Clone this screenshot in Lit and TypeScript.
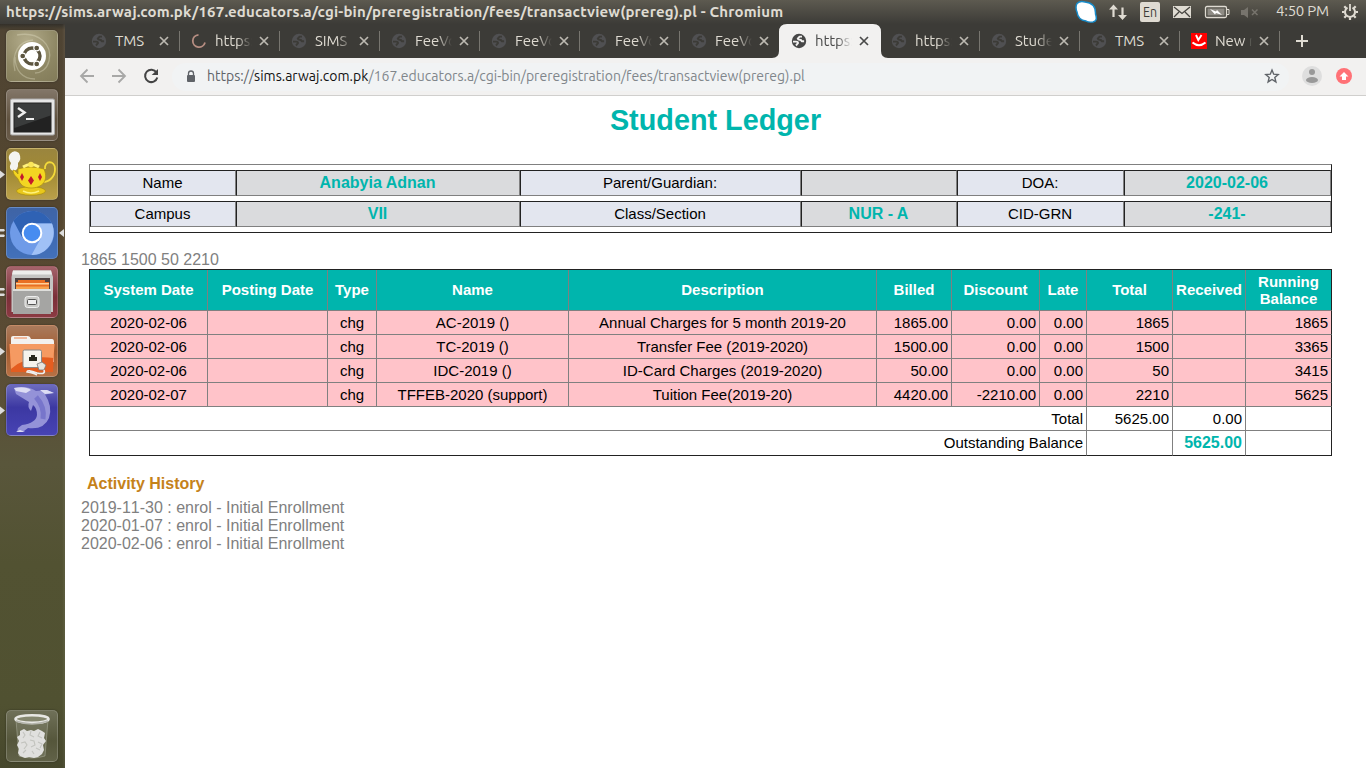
import { LitElement, html, css, svg } from "lit";
import { customElement } from "lit/decorators.js";
import { classMap } from "lit/directives/class-map.js";

const globe = svg`<circle cx="8" cy="8" r="7.200" fill="currentColor"/><path class="land" d="M11 3.600H8.600L6.700 5.600q.3 1.200 2 1.200 1.800 0 2 1.500h2.400M2 8.600h3q2.200 0 2 1.600-.8 1-2 2.300" fill="none" stroke-width="1.900" stroke-linejoin="round"/>`;

interface Tab { label: string; icon?: string; active?: boolean; sep?: boolean }
const tabs: Tab[] = [
  { label: "TMS", sep: true },
  { label: "https:", icon: "spin", sep: true },
  { label: "SIMS", sep: true },
  { label: "FeeVo", sep: true },
  { label: "FeeVo", sep: true },
  { label: "FeeVo", sep: true },
  { label: "FeeVo" },
  { label: "https:", active: true },
  { label: "https:", sep: true },
  { label: "Stude", sep: true },
  { label: "TMS", sep: true },
  { label: "New m", icon: "vod", sep: true },
];

const info: string[][] = [
  ["Name", "Anabyia Adnan", "Parent/Guardian:", "", "DOA:", "2020-02-06"],
  ["Campus", "VII", "Class/Section", "NUR - A", "CID-GRN", "-241-"],
];
const heads = ["System Date", "Posting Date", "Type", "Name", "Description", "Billed", "Discount", "Late", "Total", "Received", "Running Balance"];
const rows = [
  ["2020-02-06", "", "chg", "AC-2019 ()", "Annual Charges for 5 month 2019-20", "1865.00", "0.00", "0.00", "1865", "", "1865"],
  ["2020-02-06", "", "chg", "TC-2019 ()", "Transfer Fee (2019-2020)", "1500.00", "0.00", "0.00", "1500", "", "3365"],
  ["2020-02-06", "", "chg", "IDC-2019 ()", "ID-Card Charges (2019-2020)", "50.00", "0.00", "0.00", "50", "", "3415"],
  ["2020-02-07", "", "chg", "TFFEB-2020 (support)", "Tuition Fee(2019-20)", "4420.00", "-2210.00", "0.00", "2210", "", "5625"],
];

@customElement("desktop-launcher")
class DesktopLauncher extends LitElement {
  static styles = css`
    :host { display: flex; flex-direction: column; gap: 7px; box-sizing: border-box; width: 65px; padding: 6px 0 6px;
      background: linear-gradient(90deg, #0000 62px, #fff1 65px), linear-gradient(#33302a 0, #4f4433 6px, #54462f 180px, #5b4c35 330px, #59563b 440px, #525232 540px, #505131 680px, #46472c 100%); }
    .item { display: flex; align-items: center; height: 52px; }
    .left { width: 6px; height: 14px; }
    .right { width: 7px; height: 14px; }
    .tile { width: 52px; height: 52px; box-sizing: border-box; border-radius: 5px; border: 1px solid #ffffff30; overflow: hidden; box-shadow: 0 0 2px #0006; }
    .tile svg { display: block; width: 50px; height: 50px; }
    .dash { background: radial-gradient(circle at 40% 20%, #b3ac8b, #8e8764 60%, #827b59); }
    .term { background: linear-gradient(#827668, #60523f 60%, #695b49); }
    .tea { background: linear-gradient(#9a853e, #a38b34 50%, #baa04a); }
    .chrome { background: linear-gradient(#3f64a5, #3d68b2 50%, #4371b9); }
    .files { background: linear-gradient(#a5636b, #7b2f38 60%, #8b3a42); }
    .net { background: linear-gradient(#a97a5c, #a35c30 50%, #b87144); }
    .fish { background: linear-gradient(#6c6bbd, #3c38a2 45%, #4743b4); }
    .bin { background: linear-gradient(#6f7058, #55563b 60%, #616248); }
    .spacer { flex: 1; }
  `;

  art(kind: string) {
    switch (kind) {
      case "dash": return svg`
        <path d="M8 40C4 22 12 10 26 9M10 4c22-4 36 10 32 26-2 8-8 12-14 12M8 26c0 14 8 22 20 22" fill="none" stroke="#e6e1c8" stroke-opacity=".35" stroke-width="1.300"/>
        <circle cx="25" cy="25" r="14" fill="#fff"/><circle cx="25" cy="25" r="8" fill="none" stroke="#5c5540" stroke-width="3.400"/>
        <g fill="#5c5540" stroke="#fff" stroke-width="1.100"><circle cx="15.700" cy="25" r="2.900"/><circle cx="29.700" cy="17" r="2.900"/><circle cx="29.700" cy="33" r="2.900"/></g>`;
      case "term": return svg`
        <rect x="3.500" y="9" width="44" height="36" rx="1.500" fill="#e6e6e6" stroke="#aaa"/><rect x="6.500" y="12.500" width="38" height="30" fill="#222"/>
        <path d="M7.500 13.500h36v12L7.500 38z" fill="#3a3c3c"/><path d="m11 18 6.500 4.500L11 27" fill="none" stroke="#eee" stroke-width="2.500"/><path d="M19 29h8" stroke="#eee" stroke-width="2.200"/>`;
      case "tea": return svg`
        <path d="M3 5q4-5 9-1 3 6-1 10 1 7-5 8Q1 20 4 14 0 9 3 5z" fill="#f4f4f0"/>
        <path d="M38 20c-1-9 10-9 10 0 0 8-6 13-12 13" fill="none" stroke="#f3da3a" stroke-width="1.800"/>
        <ellipse cx="24" cy="42" rx="14.500" ry="4.300" fill="#e9c81b" stroke="#a98d10" stroke-width=".7"/>
        <path d="M11 20q13-4 26 0c5 12-2 19-13 19-8 0-11-4-13-9-2-3-5-4-5-9 2 0 4 3 5 4z" fill="#f3d622" stroke="#aa8d10" stroke-width=".7"/>
        <path d="M16 18q8-5 16 0" fill="none" stroke="#fff27b" stroke-width="3"/><circle cx="24" cy="15.500" r="2.800" fill="#fbe75a"/>
        <path d="m15 24 2 4-2 4-2-4zM24 27l3 4.500-3 4.500-3-4.500zM33 24l2 4-2 4-2-4z" fill="#c4182c"/><path d="M16 42q8 4 16 0" fill="none" stroke="#fff27b" stroke-width="1.500"/>`;
      case "chrome": return svg`
        <circle cx="25" cy="25" r="22" fill="#6f9be8"/><path d="M6.500 13C14 1 33-1 42 11l3 4.500H25L15.500 30z" fill="#2f62b4"/><path d="M25 15.500h20C51 31 40 48 24.500 47L34 30z" fill="#a0c1f6"/>
        <circle cx="25" cy="25" r="10.300" fill="#fff"/><circle cx="25" cy="25" r="8.300" fill="#478cf0"/>`;
      case "files": return svg`
        <path d="M6 3.500h38l2 6.500v35H4.500V10z" fill="#c4c4c2"/><path d="M6 3.500h38l1 4H5z" fill="#ededeb"/><path d="M8 11h35v12H8z" fill="#4e4140"/>
        <path d="M11 13h27v2h4v7H9v-7h2z" fill="#e96f24"/><path d="M9 16h33v1.500H9z" fill="#ffd19a"/><path d="M9 19.500h33V23H9z" fill="#f7a24d"/>
        <path d="M6 22h38v25H6z" fill="#a5a5a3"/><path d="M6 22h38v2H6z" fill="#dededb"/><rect x="18" y="29.500" width="14" height="11" rx="2.500" fill="#c9c9c6" stroke="#eee"/><rect x="20.500" y="32.500" width="9" height="5" rx="1" fill="#eee" stroke="#555"/>`;
      case "net": return svg`
        <path d="M4 12q0-2 2-2h15q2 0 3 3h21q2 0 2 3v20H4z" fill="#f3f1ef"/><path d="M7 12h13" stroke="#f0b89c" stroke-width="2"/>
        <path d="M2.500 18h45L46 46H4z" fill="#e45d20"/><path d="M2.500 18h45L46.500 32Q20 28 4 43z" fill="#f59a62"/>
        <rect x="16" y="24" width="18.500" height="17.500" rx="1.500" fill="#f5f4ee" stroke="#888"/><path d="M22 35v-4h2v-2h4v2h2v4z" fill="#28291e"/>
        <path d="m30 38 5-2 4 3-2 5h-5z" fill="#e5e3df" stroke="#777" stroke-width=".8"/><path d="M37 44q2 5-7 3-10-4-10-1 7 1 10 3" fill="none" stroke="#eee" stroke-width="1.600"/>`;
      case "fish": return svg`
        <path d="M7 3q13-3 22 3l11-1 7 3-9 1.500q8 12 4 23.500-5 12-21 10l-4 3-7 1 1-4 4-3q14-2 15-10 0-7-4-10l-2 6q-4-4-2-9L9 9z" fill="#9492d8"/>
        <path d="M7 3q12-2 17 2l-5 3-10-2zM33 5l7 0 7 3-9 1zM9 47l4-2 5 2z" fill="#dcdcf4"/><path d="M29 12q9 10 7 22" fill="none" stroke="#7775cb" stroke-width="5"/>`;
      default: return svg`
        <path d="M9 9h32l-3 36q-13 4-26 0z" fill="#a9ab9c" fill-opacity=".22" stroke="#bbbcae" stroke-opacity=".45"/>
        <path d="m13 20 4-2 3 2 4-1 3 1 4-2 4 2 3 2-1 5 2 3-3 4 1 5-2 4-4 3-4 1-5-1-4 1-5-2-2-3 1-4-2-4 2-4-2-4 3-2z" fill="#e0e0de"/>
        <path d="m16 21 2 3-2 3m8-7-1 4 4 2m6-5-2 4 4 2M14 32l4-1 2 3-3 4m6-9 4 1 1 4-4 2m7-5 4 2-2 4m-17 5 3-3m6 1 2 3m2-6 4 2" fill="none" stroke="#c2c3be" stroke-width="1.100"/>
        <ellipse cx="25" cy="8" rx="16.500" ry="3.800" fill="#85876f" stroke="#e8e8e4" stroke-width="2.600"/><path d="M9 10q16 6 32 0" fill="none" stroke="#b5b6ad" stroke-width="1.500"/>`;
    }
  }

  item(kind: string, left = 0, right = false) {
    const marks = [svg``, svg`<path d="M0 3.500 5 7.500 0 11.500z" fill="#ddd"/>`, svg`<path d="M0 3h4l1 1.200L4 5.500H0zM0 8.500h4l1 1.200L4 11H0z" fill="#ddd"/>`];
    return html`<div class="item">
      <svg class="left" viewBox="0 0 6 14">${marks[left]}</svg>
      <div class="tile ${kind}"><svg viewBox="0 0 50 50">${this.art(kind)}</svg></div>
      <svg class="right" viewBox="0 0 7 14">${right ? svg`<path d="M6 3 1 7l5 4z" fill="#ddd"/>` : svg``}</svg>
    </div>`;
  }
  render() {
    return html`${this.item("dash")}${this.item("term")}${this.item("tea", 1)}${this.item("chrome", 2, true)}${this.item("files", 2)}${this.item("net", 1)}${this.item("fish", 1)}
      <div class="spacer"></div>${this.item("bin")}`;
  }
}

@customElement("student-ledger")
class StudentLedger extends LitElement {
  static styles = css`
    :host { display: block; box-sizing: border-box; background: #fff; color: #808080; padding: 8px 24px 0 16px; font: 16px/18px "Liberation Sans", Arial, sans-serif; }
    h1 { margin: 0 0 0 8px; height: 60px; width: 1253px; text-align: center; color: #00b5ad; font: bold 28.8px/33px "Liberation Sans", Arial, sans-serif; }
    .info { margin-left: 8px; width: 1243px; box-sizing: border-box; height: 69px; border: 1px solid; border-color: #808080 #222 #222 #808080;
      display: grid; grid-template-columns: 146px 284px 281px 156px 167px 207px; grid-template-rows: 26px 26px; row-gap: 5px; padding-top: 5px; }
    .cell { border: 1px solid; border-color: #222 #808080 #808080 #222; text-align: center; line-height: 24px; font-size: 15px; color: #000; background: #e3e6ef; padding-right: 1px; }
    .cell.val { background: #dadbdd; color: #00b5ad; font-weight: bold; font-size: 16px; }
    .sums { margin-top: 18px; height: 18px; }
    .ledger { margin-left: 8px; width: 1243px; box-sizing: border-box; border: 1px solid #222; border-right: 0; border-bottom: 0; display: grid;
      grid-template-columns: 118px 120px 49px 192px 308px 75px 88px 47px 86px 73px 86px; grid-template-rows: 41px repeat(5, 24px) 25px; font-size: 15px; color: #000; }
    .c { border-right: 1px solid #808080; border-bottom: 1px solid #808080; display: flex; align-items: center; justify-content: center; text-align: center; line-height: 17px; }
    .end { border-right-color: #222; }
    .last { border-bottom-color: #222; padding-bottom: 1px; }
    .head { background: #00b5ad; color: #fff; font-weight: bold; padding-bottom: 1px; }
    .head.end { padding-bottom: 0; }
    .pink { background: #ffc3c9; }
    .num { justify-content: flex-end; padding-right: 3px; }
    .wide { grid-column: span 8; }
    .due { color: #00b5ad; font-weight: bold; font-size: 16px; }
    h2 { margin: 19px 0 0 6px; height: 24px; font: bold 16px/18px "Liberation Sans", Arial, sans-serif; color: #c5821a; }
    .event { font-kerning: none; }
  `;
  foot(label: string, total: string, received: string, last: boolean) {
    const cls = { c: true, num: true, last };
    return html`<div class=${classMap({ ...cls, wide: true })}>${label}</div><div class=${classMap(cls)}>${total}</div>
      <div class=${classMap({ ...cls, due: last })}>${received}</div><div class=${classMap({ ...cls, end: true })}></div>`;
  }
  render() {
    return html`
      <h1>Student Ledger</h1>
      <div class="info">${info.map(r => r.map((t, i) => html`<div class=${classMap({ cell: true, val: i % 2 === 1 })}>${t}</div>`))}</div>
      <div class="sums">1865 1500 50 2210</div>
      <div class="ledger">
        ${heads.map((t, i) => html`<div class=${classMap({ c: true, head: true, end: i === 10 })}>${t}</div>`)}
        ${rows.map(r => r.map((t, i) => html`<div class=${classMap({ c: true, pink: true, num: i > 4, end: i === 10 })}>${t}</div>`))}
        ${this.foot("Total", "5625.00", "0.00", false)}
        ${this.foot("Outstanding Balance", "", "5625.00", true)}
      </div>
      <h2>Activity History</h2>
      ${["2019-11-30", "2020-01-07", "2020-02-06"].map(d => html`<div class="event">${d} : enrol - Initial Enrollment</div>`)}`;
  }
}

@customElement("app-root")
class AppRoot extends LitElement {
  static styles = css`
    :host { display: grid; grid-template: 24px 744px / 65px 1301px; width: 1366px; height: 768px; overflow: hidden; font-family: Ubuntu, "Noto Sans", sans-serif; }
    svg { display: block; flex: none; }
    .panel { grid-column: 1 / 3; display: flex; align-items: center; padding-left: 6px; background: linear-gradient(#5d5a50, #3c3b37); color: #dfdbd2; }
    .title { flex: none; width: 1069px; font-size: 15px; font-weight: bold; line-height: 24px; letter-spacing: 0.2px; white-space: nowrap; }
    .tray { width: 201px; height: 24px; }
    .clock { flex: none; font-size: 15px; line-height: 18px; padding-bottom: 2px; width: 65px; letter-spacing: -0.25px; white-space: nowrap; }
    .main { display: grid; grid-template-rows: 34px 38px 1fr; }
    .tabs { display: flex; background: #3c3b37; padding-left: 15px; }
    .tab { position: relative; flex: none; width: 100px; box-sizing: border-box; display: flex; align-items: center; padding-left: 11px; color: #dfdbd2; font-size: 15px; }
    .tab svg.ico { width: 16px; height: 16px; color: #505052; }
    .land { stroke: #3c3b37; }
    .label { flex: none; margin-left: 8px; padding-bottom: 2px; width: 44px; white-space: nowrap; -webkit-mask-image: linear-gradient(90deg, #000 22px, #0000 37px); letter-spacing: -0.1px; }
    .label.short { -webkit-mask-image: none; }
    .label.word { -webkit-mask-image: linear-gradient(90deg, #000 29px, #0000 37px); }
    .x { width: 10px; height: 10px; color: #bcb9b1; }
    .sep::after { content: ""; position: absolute; right: 0; top: 7px; width: 1px; height: 20px; background: #77756f; }
    .tab.active { color: #4a4a4a; }
    .shape { position: absolute; left: -8px; top: 0; width: 116px; height: 34px; }
    .active .ico, .active .label, .active .x { position: relative; }
    .active svg.ico { color: #474747; }
    .active .x { color: #4a4a4a; }
    .active .land { stroke: #f2f1f0; }
    .plus { margin: 11px 0 0 16px; width: 12px; height: 12px; }
    .bar { display: flex; align-items: center; background: #f2f1f0; border-bottom: 1px solid #d0cfcd; }
    .nav { width: 107px; height: 37px; }
    .omni { width: 1117px; height: 28px; border-radius: 14px; background: #f1f3f4; display: flex; align-items: center; font-size: 14px; color: #80868b; letter-spacing: 0.01px; white-space: nowrap; }
    .lock { width: 35px; height: 28px; }
    .url { flex: none; width: 1042px; padding-bottom: 2px; }
    .scheme { color: #5f6368; }
    .host { color: #111; }
    .ends { width: 77px; height: 37px; }
  `;

  icon(t: Tab) {
    if (t.icon === "spin") return svg`<path d="M7.500 1.800A6.200 6.200 0 1 0 14 9.500" fill="none" stroke="#b78e82" stroke-width="1.800"/>`;
    if (t.icon === "vod") return svg`<path d="M0 0h16v16H0z" fill="#f00"/><path d="m5 2 2.300 5L10.500 2" fill="none" stroke="#fff" stroke-width="1.900"/><path d="M1.500 9.500q6.500 5.500 13 0" fill="none" stroke="#fff" stroke-width="1.900"/>`;
    return globe;
  }

  render() {
    return html`
      <div class="panel">
        <div class="title">https://sims.arwaj.com.pk/167.educators.a/cgi-bin/preregistration/fees/transactview(prereg).pl - Chromium</div>
        <svg class="tray" viewBox="1075 0 201 24">
          <path d="M1077 3.500q3-3 8-1.500 11 1 10.500 12 2.500 7-2.500 8-5 .5-7-1-8-1-9-9-2-5 0-8.500z" fill="#fff" stroke="#178bc9" stroke-width="1.500"/>
          <path d="M1113.500 4.500 1109 9.500h3.400V17h2.200V9.500h3.400zM1122.500 20l4.500-5h-3.400V7.500h-2.200V15h-3.400z" fill="#dfdbd2"/>
          <rect x="1140" y="2" width="20" height="20" rx="2" fill="#dfdbd2"/><text x="1143" y="17" font-size="14" fill="#3c3b37" textLength="14" lengthAdjust="spacingAndGlyphs">En</text>
          <rect x="1173" y="6" width="18" height="12" fill="#dfdbd2"/><path d="m1174 7 8 6.500 8-6.500M1174 17l5-5m11 5-5-5" fill="none" stroke="#45433e" stroke-width="1.300"/>
          <rect x="1205.500" y="6.500" width="21" height="11" rx="1.500" fill="none" stroke="#dfdbd2" stroke-width="1.300"/><path d="M1207.500 8.500h17v7h-17z" fill="#8f8c85"/><path d="M1227 9.500h2v5h-2" fill="none" stroke="#dfdbd2"/><path d="m1210 9 6 2.500 1-1.500 5 5-6-2-1 1.500z" fill="#fff"/>
          <path d="M1241 10h3l4-3v11l-4-3h-3z" fill="#77746d"/><path d="m1252 9.500 5.500 5.500m0-5.500-5.500 5.500" stroke="#77746d" stroke-width="1.500"/>
        </svg>
        <div class="clock">4:50 PM</div>
        <svg width="18" height="18" viewBox="0 0 18 18"><g fill="none" stroke="#dfdbd2"><path d="M6.500 4.600a5 5 0 1 0 5 0" stroke-width="2"/><path d="M9 1v7" stroke-width="1.800"/><path d="M1 9h2.500M14.500 9H17M9 14.500V17M3.300 3.300l1.900 1.900M14.700 3.300l-1.900 1.900M3.300 14.700l1.900-1.900M14.700 14.700l-1.900-1.900" stroke-width="2.200"/></g></svg>
      </div>
      <desktop-launcher></desktop-launcher>
      <div class="main">
        <div class="tabs">
          ${tabs.map(t => html`<div class=${classMap({ tab: true, active: !!t.active, sep: !!t.sep })}>
            ${t.active ? html`<svg class="shape" viewBox="0 0 116 34"><path d="M0 34q7 0 7-7V8q0-8 8-8h86q8 0 8 8v19q0 7 7 7z" fill="#f2f1f0"/></svg>` : ""}
            <svg class="ico" viewBox="0 0 16 16">${this.icon(t)}</svg><span class=${classMap({ label: true, short: t.label.length < 4, word: t.icon === "vod" })}>${t.label}</span>
            <svg class="x" viewBox="0 0 10 10"><path d="m1 1 8 8m0-8L1 9" stroke="currentColor" stroke-width="1.700"/></svg>
          </div>`)}
          <svg class="plus" viewBox="0 0 12 12"><path d="M6 0v12M0 6h12" stroke="#dfdbd2" stroke-width="2"/></svg>
        </div>
        <div class="bar">
          <svg class="nav" viewBox="0 0 107 37" fill="none" stroke-width="1.800">
            <path d="M29 18H16m6.500-6.500L16 18l6.500 6.500M47 18h13m-6.500-6.500L60 18l-6.500 6.500" stroke="#a8a8a7"/>
            <path d="M91.500 14.500a6.200 6.200 0 1 0 .8 5" stroke="#444" stroke-width="2"/><path d="M93 11v6h-6.300z" fill="#444"/>
          </svg>
          <div class="omni">
            <svg class="lock" viewBox="0 0 35 28"><rect x="15" y="12" width="8" height="7" rx="1" fill="#5f6368"/><path d="M16.500 12.500v-2a2.500 2.500 0 0 1 5 0v2" fill="none" stroke="#5f6368" stroke-width="1.300"/></svg>
            <div class="url"><span class="scheme">https://</span><span class="host">sims.arwaj.com.pk</span>/167.educators.a/cgi-bin/preregistration/fees/transactview(prereg).pl</div>
            <svg width="40" height="28" viewBox="0 0 40 28"><path d="m23 7 1.700 4.200 4.500.4-3.400 2.900 1.100 4.400-3.900-2.400-3.900 2.400 1.100-4.400-3.400-2.900 4.500-.4z" fill="none" stroke="#5f6368" stroke-width="1.400"/></svg>
          </div>
          <svg class="ends" viewBox="0 0 77 37"><circle cx="23" cy="18" r="10" fill="#dedede"/><circle cx="23" cy="14" r="3" fill="#999"/><ellipse cx="23" cy="22" rx="6" ry="3" fill="#999"/>
            <circle cx="55" cy="18" r="8" fill="#ff7176"/><path d="m55 14 4.500 4.500h-2.500v3.500h-4v-3.500h-2.500z" fill="#fff"/></svg>
        </div>
        <student-ledger></student-ledger>
      </div>`;
  }
}
